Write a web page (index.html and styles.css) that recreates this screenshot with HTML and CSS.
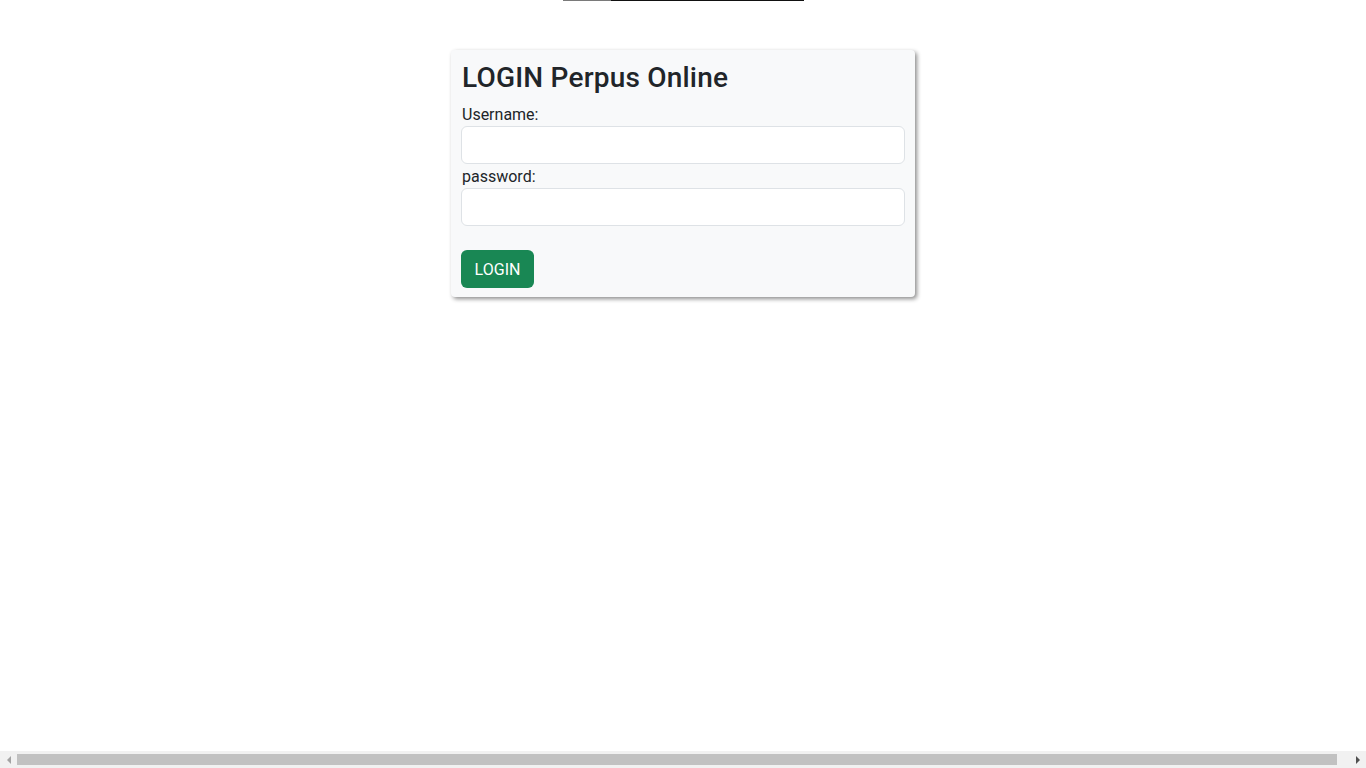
FILE: index.html
```html
<!DOCTYPE html>
<html lang="id">
<head>
<meta charset="utf-8">
<title>LOGIN Perpus Online</title>
<link rel="stylesheet" href="styles.css">
</head>
<body>
<div class="topline"><span class="seg-gray"></span><span class="seg-black"></span></div>
<main class="page">
  <form class="card">
    <h3 class="title">LOGIN Perpus Online</h3>
    <label class="label" for="username">Username:</label>
    <input class="input" id="username" type="text">
    <label class="label" for="password">password:</label>
    <input class="input" id="password" type="password">
    <button class="btn" type="button">LOGIN</button>
  </form>
</main>
<div class="hscroll">
  <span class="arrow arrow-left"></span>
  <span class="track"><span class="thumb"></span></span>
  <span class="arrow arrow-right"></span>
</div>
</body>
</html>
```
FILE: styles.css
```css
* { box-sizing: border-box; }
html, body { margin: 0; padding: 0; background: #fff; overflow: hidden; }
body {
  font-family: Roboto, "Noto Sans", sans-serif;
  font-size: 16px;
  line-height: 1.5;
  color: #212529;
  height: 768px;
}
.topline {
  display: flex;
  height: 1px;
  padding-left: 563px;
}
.seg-gray { width: 48px; background: #7a7a7a; }
.seg-black { width: 193px; background: #111; }

.page {
  display: flex;
  justify-content: center;
  padding-top: 49px;
}
.card {
  width: 464px;
  background: #f8f9fa;
  padding: 10px 10px 9px 10px;
  border-radius: 4px;
  box-shadow: 2px 2px 4px rgba(0,0,0,0.45);
  display: flex;
  flex-direction: column;
  align-items: flex-start;
}
.title {
  font-size: 28px;
  font-weight: 500;
  line-height: 1.2;
  margin: 1px 0 7px 1px;
  letter-spacing: 0.2px;
}
.label {
  display: block;
  line-height: 23px;
  padding: 1px 0 0 1px;
}
.input {
  width: 100%;
  height: 38px;
  border: 1px solid #dee2e6;
  border-radius: 6px;
  background: #fff;
  font: inherit;
  padding: 6px 12px;
}
.btn {
  margin-top: 24px;
  height: 38px;
  width: 73px;
  padding: 2px 0 0 0;
  border: none;
  border-radius: 6px;
  background: #198754;
  color: #fff;
  font: inherit;
  font-size: 16px;
}

.hscroll {
  position: fixed;
  left: 0;
  bottom: 0;
  width: 100%;
  height: 17px;
  background: #f1f1f1;
  display: flex;
  align-items: center;
}
.arrow {
  width: 17px;
  height: 17px;
  display: flex;
  align-items: center;
  justify-content: center;
  flex: none;
}
.arrow::before {
  content: "";
  width: 0;
  height: 0;
  border-top: 4px solid transparent;
  border-bottom: 4px solid transparent;
}
.arrow-left::before { border-right: 4px solid #a3a3a3; }
.arrow-right::before { border-left: 4px solid #505050; }
.track {
  flex: 1;
  height: 17px;
  display: flex;
  align-items: center;
}
.thumb {
  width: 1320px;
  height: 11px;
  background: #c1c1c1;
}
```
